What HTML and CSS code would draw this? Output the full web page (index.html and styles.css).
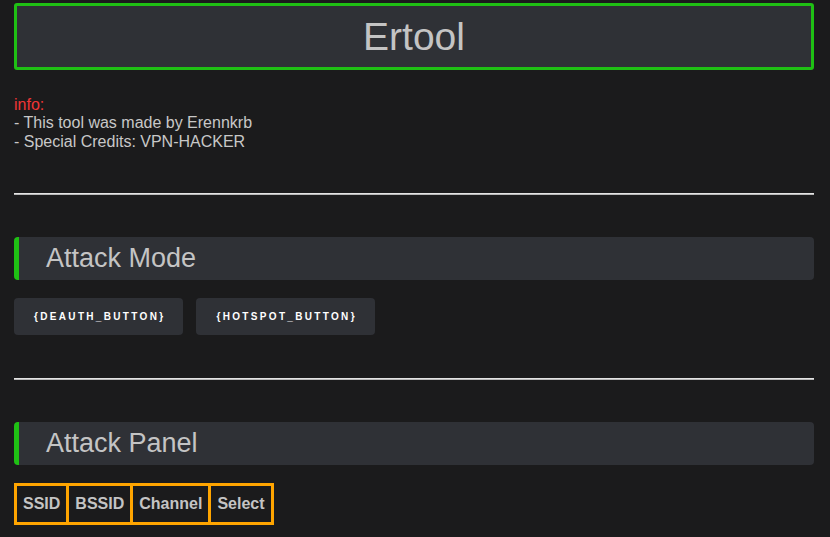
FILE: index.html
```html
<!DOCTYPE html>
<html lang="en">
<head>
<meta charset="utf-8">
<title>Ertool</title>
<link rel="stylesheet" href="styles.css">
</head>
<body>
<div class="page">
  <div class="header">Ertool</div>
  <div class="info">
    <span class="info-label">info:</span><br>
    - This tool was made by Erennkrb<br>
    - Special Credits: VPN-HACKER
  </div>
  <hr class="rule">
  <div class="section-bar">Attack Mode</div>
  <div class="buttons">
    <button class="btn">{DEAUTH_BUTTON}</button>
    <button class="btn">{HOTSPOT_BUTTON}</button>
  </div>
  <hr class="rule">
  <div class="section-bar">Attack Panel</div>
  <table class="panel">
    <tr>
      <th>SSID</th>
      <th>BSSID</th>
      <th>Channel</th>
      <th>Select</th>
    </tr>
  </table>
</div>
</body>
</html>
```
FILE: styles.css
```css
html, body {
  margin: 0;
  padding: 0;
  background: #1b1b1c;
}

body {
  font-family: "Liberation Sans", Arial, sans-serif;
  color: #c4c4c4;
}

.page {
  width: 800px;
  padding: 3px 16px 0 14px;
  display: flex;
  flex-direction: column;
  align-items: stretch;
}

.header {
  height: 61px;
  line-height: 61px;
  border: 3px solid #1fc014;
  border-radius: 3px;
  background: #2f3136;
  text-align: center;
  font-size: 39px;
  color: #c4c4c4;
}

.info {
  margin-top: 26px;
  font-size: 16px;
  line-height: 18.4px;
  color: #c8c8c8;
}

.info-label {
  color: #ef3535;
}

.rule {
  margin: 42px 0 0 0;
  height: 0;
  border: 0;
  border-top: 1px solid #e4e4e4;
  border-bottom: 1px solid #b8b8b8;
}

.section-bar {
  margin-top: 42px;
  height: 43px;
  line-height: 43px;
  background: #2f3136;
  border-left: 5px solid #1fc014;
  border-radius: 4px;
  padding-left: 27px;
  font-size: 27px;
  color: #c4c4c4;
}

.buttons {
  margin-top: 18px;
  display: flex;
  gap: 13px;
  margin-bottom: 1px;
}

.btn {
  font-family: "Liberation Sans", Arial, sans-serif;
  font-weight: bold;
  font-size: 10px;
  letter-spacing: 2.33px;
  line-height: 13px;
  color: #ffffff;
  background: #2f3136;
  border: 0;
  border-radius: 4px;
  padding: 12px 18px 12px 20px;
  height: 37px;
}

.panel {
  margin-top: 18px;
  border-collapse: collapse;
  align-self: flex-start;
}

.panel th {
  border: 3px solid #ffa500;
  padding: 9px 6px;
  font-size: 16px;
  font-weight: bold;
  line-height: 18px;
  color: #c4c4c4;
}
```
